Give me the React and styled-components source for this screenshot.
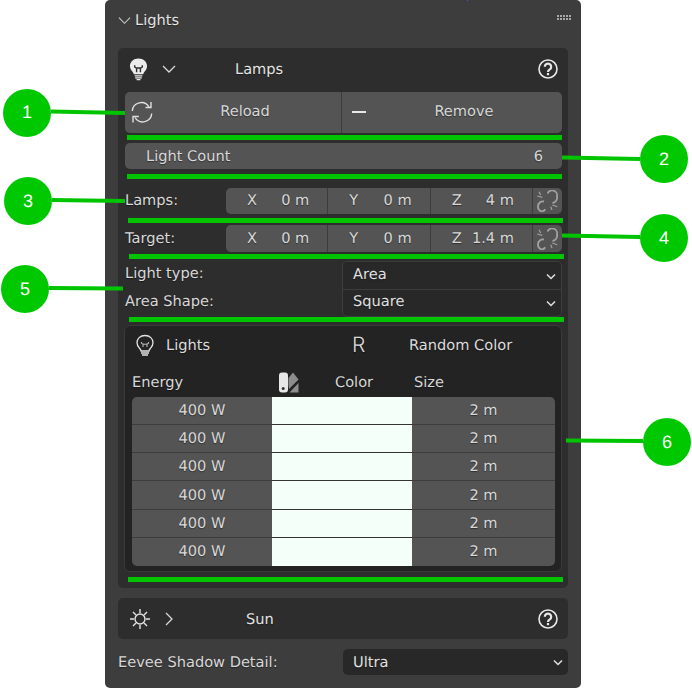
import React from "react";
import styled, { createGlobalStyle } from "styled-components";

const Global = createGlobalStyle`
  html, body { margin: 0; padding: 0; background: #fff; }
  body {
    font-family: "DejaVu Sans", "Noto Sans", sans-serif;
    font-size: 14.6px;
    color: #d8d8d8;
    text-rendering: geometricPrecision;
  }
  * { box-sizing: border-box; }
  svg { display: block; }
`;

const Page = styled.div`
  position: relative;
  width: 692px;
  height: 688px;
  overflow: hidden;
  padding-left: 105px;
  text-shadow: 0 1px 1px rgba(0, 0, 0, 0.45);
`;
const Panel = styled.div`
  width: 476px;
  height: 688px;
  padding: 0 13px;
  background: #3d3d3d;
  border-radius: 5px;
`;
const PanelHeader = styled.header`
  height: 48px;
  display: grid;
  grid-template-columns: 17px 1fr auto;
  align-items: center;
  padding-bottom: 8px;
  color: #e4e4e4;
`;
const Grip = styled.div`
  display: grid;
  grid-template-columns: repeat(5, 2px);
  gap: 1px;
  margin-right: -3px;
  margin-top: -5px;
  & > i { width: 2px; height: 2px; background: #a8a8a8; }
`;
const Card = styled.section`
  background: #2d2d2d;
  border-radius: 5px;
  padding: 0 6px 0 7px;
  height: ${(p) => p.$height}px;
  & + & { margin-top: 10px; }
`;
const CardHeader = styled.div`
  height: 42px;
  display: grid;
  grid-template-columns: 33px ${(p) => p.$titleOffset}px 1fr auto;
  align-items: center;
  padding: 0 4px;
  color: #e4e4e4;
  margin-bottom: 2px;
`;
const Caption = styled.span`
  margin-bottom: ${(p) => p.$lift ?? 0}px;
`;
const ButtonGroup = styled.div`
  display: grid;
  grid-template-columns: 216px 1fr;
  column-gap: 1px;
  height: 41px;
  background: #3d3d3d;
  border-radius: 5px;
  overflow: hidden;
`;
const Segment = styled.button`
  display: grid;
  grid-template-columns: 24px 1fr;
  align-items: center;
  justify-items: center;
  border: 0;
  padding: 0;
  background: #545454;
  color: #d8d8d8;
  font: inherit;
  text-rendering: inherit;
  text-shadow: inherit;
`;
const SegmentIcon = styled.span`
  justify-self: start;
  margin-left: ${(p) => p.$inset}px;
  margin-bottom: 2px;
`;
const Rule = styled.div`
  height: 5px;
  background: #00c400;
  margin: ${(p) => p.$top}px ${(p) => p.$right}px ${(p) => p.$bottom}px ${(p) => p.$left}px;
`;
const CountField = styled.div`
  height: 26px;
  background: #545454;
  border-radius: 5px;
  display: flex;
  justify-content: space-between;
  align-items: center;
  padding: 0 19px 0 21px;
`;
const VectorRow = styled.div`
  display: grid;
  grid-template-columns: 101px 1fr;
  align-items: center;
  height: ${(p) => p.$height}px;
`;
const VectorField = styled.div`
  display: grid;
  grid-template-columns: 1fr 1fr 1fr 29px;
  column-gap: 1px;
  height: 100%;
  background: #3d3d3d;
  border-radius: 5px;
  overflow: hidden;
`;
const AxisCell = styled.div`
  background: #545454;
  display: flex;
  justify-content: space-between;
  align-items: center;
  padding: 0 18px 1px 21px;
`;
const LinkCell = styled.div`
  background: #545454;
  display: flex;
  align-items: center;
  justify-content: center;
`;
const SelectRows = styled.div`
  display: grid;
  grid-template-columns: 217px 1fr;
  grid-template-rows: 28px 28px;
  align-items: center;
`;
const SelectStack = styled.div`
  grid-column: 2;
  grid-row: 1 / span 2;
  align-self: stretch;
  display: grid;
  grid-template-rows: 1fr 1fr;
  border: 1px solid #3d3d3d;
  border-radius: 5px;
  background: #282828;
`;
const SelectOption = styled.div`
  display: flex;
  align-items: center;
  justify-content: space-between;
  padding: 0 3px 0 10px;
  color: #e0e0e0;
  & + & { border-top: 1px solid #3d3d3d; }
`;
const InnerBox = styled.div`
  height: 247px;
  margin-left: -1px;
  background: #232323;
  border: 1px solid #3a3a3a;
  border-radius: 6px;
  padding: 0 6px 0 7px;
`;
const LightsHead = styled.div`
  height: 39px;
  display: grid;
  grid-template-columns: 220px 57px 1fr;
  align-items: center;
  color: #dcdcdc;
`;
const LightsName = styled.div`
  display: flex;
  align-items: center;
  gap: 11px;
  padding-left: 3px;
`;
const Glyph = styled.span`
  font-family: "Inter", sans-serif;
  font-weight: 300;
  font-size: 21px;
  line-height: 1;
`;
const Columns = styled.div`
  height: 32px;
  display: grid;
  grid-template-columns: 140px 140px 1fr;
  align-items: center;
  padding-top: 3px;
`;
const ColorHead = styled.div`
  display: flex;
  align-items: center;
  gap: 36px;
  padding-left: 6px;
`;
const SizeHead = styled.span`
  padding-left: 2px;
`;
const Table = styled.div`
  height: 169px;
  display: grid;
  grid-template-columns: 140px 140px 1fr;
  grid-template-rows: repeat(6, 1fr);
  border-radius: 5px;
  overflow: hidden;
`;
const ValueCell = styled.div`
  display: flex;
  align-items: center;
  justify-content: center;
  background: #545454;
  &:not(:nth-last-child(-n + 3)) { border-bottom: 1px solid #3d3d3d; }
`;
const ColorCell = styled.div`
  background: #f4fff9;
  &:not(:nth-last-child(-n + 3)) { border-bottom: 1px solid #333; }
`;
const DetailRow = styled.div`
  display: grid;
  grid-template-columns: 225px 1fr;
  height: 26px;
  margin-top: 10px;
  align-items: center;
`;
const DetailSelect = styled.div`
  height: 100%;
  background: #282828;
  border-radius: 5px;
  display: flex;
  align-items: center;
  justify-content: space-between;
  padding: 0 3px 0 10px;
  color: #e0e0e0;
`;
const Overlay = styled.svg`
  position: absolute;
  inset: 0;
  pointer-events: none;
`;
const Badge = styled.div`
  position: absolute;
  left: ${(p) => p.$x - 24}px;
  top: ${(p) => p.$y - 24}px;
  width: 48px;
  height: 48px;
  border-radius: 50%;
  background: #00c800;
  color: #fff;
  display: flex;
  align-items: center;
  justify-content: center;
  font-family: "Liberation Sans", sans-serif;
  font-size: 18px;
  text-shadow: none;
`;
const Speck = styled.div`
  position: absolute;
  left: 467px;
  top: 0;
  width: 1px;
  height: 1px;
  background: #2f6fc4;
`;

const Chevron = ({ dir = "down", size = 14, color = "#d8d8d8", w = 1.3 }) => (
  <svg width={size} height={size} viewBox="0 0 14 14" fill="none" stroke={color} strokeWidth={w}>
    <polyline points={dir === "down" ? "1,4 7,10 13,4" : "4,1 10,7 4,13"} />
  </svg>
);
const SmallChevron = () => (
  <svg width="14" height="14" viewBox="0 0 14 14" fill="none" stroke="#e0e0e0" strokeWidth="1.5">
    <polyline points="3,5.5 7,9.5 11,5.5" />
  </svg>
);
const BulbSolid = () => (
  <svg width="19" height="23" viewBox="0 0 20 24">
    <path d="M10 0.5C4.8 0.5 1 4 1 8.6c0 3.2 2.2 5 3.4 6.7.5.7.6 1.2.7 1.7h9.8c.1-.5.2-1 .7-1.7C17 13.6 19 11.8 19 8.6 19 4 15.2.5 10 .5z" fill="#ececec" />
    <path d="M6 7.5v1.700c0 1 .8 1.3 4 1.3s4-.3 4-1.3V7.5M8 10.5v4.500M12 10.5v4.500" fill="none" stroke="#2d2d2d" strokeWidth="1.5" />
    <path d="M6 18.7h8M6.5 20.7h7M8 22.7h4" stroke="#ececec" strokeWidth="1.3" />
  </svg>
);
const BulbOutline = () => (
  <svg width="20" height="24" viewBox="0 0 20 24" fill="none">
    <path d="M10 1.500C5 1.500 2 4.800 2 8.800c0 3 2 4.700 3.100 6.200.6.800.8 1.400.9 2h8c.1-.6.3-1.200.9-2C16 13.500 18 11.800 18 8.800c0-4-3-7.300-8-7.300z" stroke="#e4e4e4" strokeWidth="1.3" />
    <path d="M6.500 8v1c0 .8 1 1.200 3.500 1.200s3.500-.4 3.500-1.200V8M8 10v3M12 10v3" stroke="#b8b8b8" strokeWidth="1.1" />
    <path d="M6 19h8M7 21h6" stroke="#e4e4e4" strokeWidth="1.3" />
  </svg>
);
const Help = () => (
  <svg width="20" height="20" viewBox="0 0 20 20" fill="none">
    <circle cx="10" cy="10" r="9" stroke="#e8e8e8" strokeWidth="1.6" />
    <path d="M6.800 7.700a3.200 3.200 0 1 1 5 2.700c-1.100.7-1.800 1.200-1.800 2.500" stroke="#e8e8e8" strokeWidth="2.2" />
    <rect x="8.900" y="14" width="2.200" height="2.200" fill="#e8e8e8" />
  </svg>
);
const Reload = () => (
  <svg width="22" height="22" viewBox="0 0 22 22" fill="none" stroke="#e0e0e0" strokeWidth="1.4">
    <path d="M1.300 10A9 9 0 0 1 18 6" />
    <path d="M20 1v5.500h-5.500" />
    <path d="M20.700 12.500A9 9 0 0 1 4 16.500" />
    <path d="M2 21.500v-6h5.800" />
  </svg>
);
const Dash = () => (
  <svg width="14" height="2" viewBox="0 0 14 2">
    <rect width="14" height="2" fill="#e8e8e8" />
  </svg>
);
const Unlink = () => (
  <svg width="21" height="22" viewBox="0 0 21 22" fill="none" stroke="#a0a0a0" strokeWidth="1.8">
    <path d="M10.500 3.500A5 5 0 0 1 20 6.500 5.500 5.500 0 0 1 15.500 13" />
    <path d="M7 11.500A5 5 0 0 0 1 16.500a5 5 0 0 0 3 4.800 4 4 0 0 0 4.200-2" />
    <path d="M2 1.700l1.700 3.300M.3 6l5 1.300M13.700 16.700l1.300 3.300M15.300 15l5 1.700" strokeWidth="1.200" />
  </svg>
);
const Swatches = () => (
  <svg width="21" height="21" viewBox="0 0 21 21">
    <path d="M10.500 13V6l4.500-5.500L20.500 7.500 11 17z" fill="#8d8d8d" />
    <path d="M11.500 20.500L20.500 11v9.500z" fill="#8d8d8d" />
    <rect x="1" y="0.500" width="9" height="20" rx="3" fill="#e8e8e8" />
    <circle cx="5.200" cy="16.500" r="1.500" fill="#333" />
  </svg>
);
const Sun = () => (
  <svg width="22" height="22" viewBox="0 0 22 22" fill="none" stroke="#e4e4e4" strokeWidth="1.4">
    <circle cx="11" cy="11" r="5" />
    <path d="M11 1v4M11 17v4M1 11h4M17 11h4M4 4l3 3M15 15l3 3M18 4l-3 3M7 15l-3 3" />
  </svg>
);

const Vector = ({ label, z, height, lift }) => (
  <VectorRow $height={height}>
    <Caption $lift={lift}>{label}</Caption>
    <VectorField>
      <AxisCell><span>X</span><span>0 m</span></AxisCell>
      <AxisCell><span>Y</span><span>0 m</span></AxisCell>
      <AxisCell><span>Z</span><span>{z}</span></AxisCell>
      <LinkCell><Unlink /></LinkCell>
    </VectorField>
  </VectorRow>
);

const lines = [
  [51, 111.5, 125, 113],
  [562, 157.5, 640, 159],
  [52, 200, 125, 201],
  [562, 235.5, 640, 237],
  [49, 288, 123, 288.5],
  [566, 440.5, 643, 441],
];
const badges = [
  [1, 27, 112.5],
  [2, 664, 159],
  [3, 28, 201],
  [4, 664, 238],
  [5, 25, 289],
  [6, 667, 442],
];

export default function App() {
  return (
    <>
      <Global />
      <Page>
        <Panel>
          <PanelHeader>
            <Chevron size={13} color="#c8c8c8" w={1.2} />
            <span>Lights</span>
            <Grip>{Array.from({ length: 10 }, (_, i) => <i key={i} />)}</Grip>
          </PanelHeader>
          <Card $height={540}>
            <CardHeader $titleOffset={73}>
              <BulbSolid />
              <Chevron />
              <span>Lamps</span>
              <Help />
            </CardHeader>
            <ButtonGroup>
              <Segment>
                <SegmentIcon $inset={6}><Reload /></SegmentIcon>
                <Caption $lift={2}>Reload</Caption>
              </Segment>
              <Segment>
                <SegmentIcon $inset={10}><Dash /></SegmentIcon>
                <Caption $lift={2}>Remove</Caption>
              </Segment>
            </ButtonGroup>
            <Rule $top={2} $bottom={3} $left={2} $right={0} />
            <CountField><span>Light Count</span><span>6</span></CountField>
            <Rule $top={5} $bottom={9} $left={2} $right={0} />
            <Vector label="Lamps:" z="4 m" height={26} lift={1} />
            <Rule $top={4} $bottom={2} $left={3} $right={-1} />
            <Vector label="Target:" z="1.4 m" height={27} lift={1} />
            <Rule $top={2} $bottom={2} $left={4} $right={-2} />
            <SelectRows>
              <Caption $lift={3}>Light type:</Caption>
              <SelectStack>
                <SelectOption><Caption $lift={3}>Area</Caption><SmallChevron /></SelectOption>
                <SelectOption><Caption $lift={3}>Square</Caption><SmallChevron /></SelectOption>
              </SelectStack>
              <Caption $lift={3}>Area Shape:</Caption>
            </SelectRows>
            <Rule $top={0} $bottom={3} $left={4} $right={-2} />
            <InnerBox>
              <LightsHead>
                <LightsName><BulbOutline /><span>Lights</span></LightsName>
                <Glyph>R</Glyph>
                <span>Random Color</span>
              </LightsHead>
              <Columns>
                <span>Energy</span>
                <ColorHead><Swatches /><span>Color</span></ColorHead>
                <SizeHead>Size</SizeHead>
              </Columns>
              <Table>
                {Array.from({ length: 6 }, (_, i) => (
                  <React.Fragment key={i}>
                    <ValueCell>400 W</ValueCell>
                    <ColorCell />
                    <ValueCell>2 m</ValueCell>
                  </React.Fragment>
                ))}
              </Table>
            </InnerBox>
            <Rule $top={5} $bottom={0} $left={3} $right={-1} />
          </Card>
          <Card $height={41}>
            <CardHeader $titleOffset={84}>
              <Sun />
              <Chevron dir="right" />
              <span>Sun</span>
              <Help />
            </CardHeader>
          </Card>
          <DetailRow>
            <span>Eevee Shadow Detail:</span>
            <DetailSelect><span>Ultra</span><SmallChevron /></DetailSelect>
          </DetailRow>
        </Panel>
        <Speck />
        <Overlay width="692" height="688" viewBox="0 0 692 688">
          {lines.map(([x1, y1, x2, y2], i) => (
            <line key={i} x1={x1} y1={y1} x2={x2} y2={y2} stroke="#00c400" strokeWidth="4" />
          ))}
        </Overlay>
        {badges.map(([n, x, y]) => (
          <Badge key={n} $x={x} $y={y}>{n}</Badge>
        ))}
      </Page>
    </>
  );
}
